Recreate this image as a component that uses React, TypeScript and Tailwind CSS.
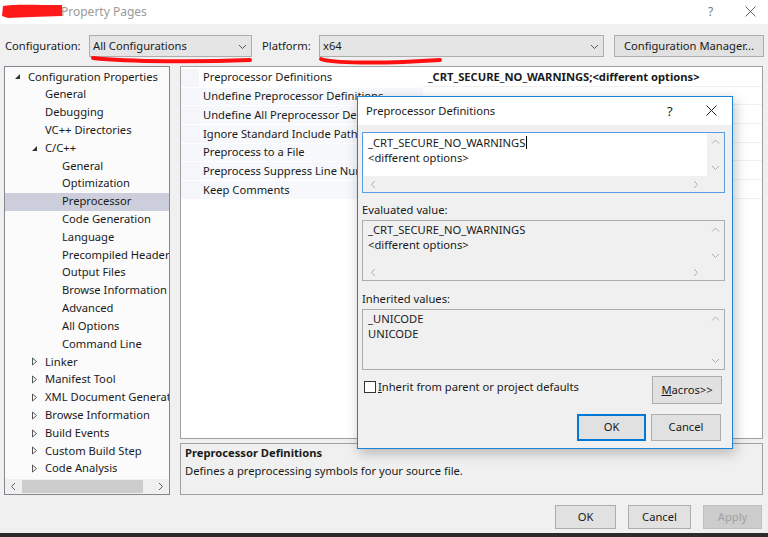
import React from "react";

const F = { fontFamily: '"Segoe UI", "Noto Sans", sans-serif' };

function Chevron({ dir, className = "" }: { dir: "down" | "up" | "left" | "right"; className?: string }) {
  const d =
    dir === "down" ? "M1 3 L4.5 6.5 L8 3" : dir === "up" ? "M1 6.5 L4.5 3 L8 6.5" : dir === "left" ? "M6 1 L2.5 4.5 L6 8" : "M3 1 L6.5 4.5 L3 8";
  return (
    <svg width="9" height="9" viewBox="0 0 9 9" className={className}>
      <path d={d} fill="none" stroke="currentColor" strokeWidth="1" />
    </svg>
  );
}

type Item = { t: string; lvl: number; tri?: "open" | "closed"; sel?: boolean };
const tree: Item[] = [
  { t: "Configuration Properties", lvl: 0, tri: "open" },
  { t: "General", lvl: 1 },
  { t: "Debugging", lvl: 1 },
  { t: "VC++ Directories", lvl: 1 },
  { t: "C/C++", lvl: 1, tri: "open" },
  { t: "General", lvl: 2 },
  { t: "Optimization", lvl: 2 },
  { t: "Preprocessor", lvl: 2, sel: true },
  { t: "Code Generation", lvl: 2 },
  { t: "Language", lvl: 2 },
  { t: "Precompiled Headers", lvl: 2 },
  { t: "Output Files", lvl: 2 },
  { t: "Browse Information", lvl: 2 },
  { t: "Advanced", lvl: 2 },
  { t: "All Options", lvl: 2 },
  { t: "Command Line", lvl: 2 },
  { t: "Linker", lvl: 1, tri: "closed" },
  { t: "Manifest Tool", lvl: 1, tri: "closed" },
  { t: "XML Document Generator", lvl: 1, tri: "closed" },
  { t: "Browse Information", lvl: 1, tri: "closed" },
  { t: "Build Events", lvl: 1, tri: "closed" },
  { t: "Custom Build Step", lvl: 1, tri: "closed" },
  { t: "Code Analysis", lvl: 1, tri: "closed" },
];

const props = [
  "Preprocessor Definitions",
  "Undefine Preprocessor Definitions",
  "Undefine All Preprocessor Definitions",
  "Ignore Standard Include Paths",
  "Preprocess to a File",
  "Preprocess Suppress Line Numbers",
  "Keep Comments",
];

function Tri({ kind }: { kind: "open" | "closed" }) {
  return kind === "open" ? (
    <svg width="7" height="7" viewBox="0 0 7 7">
      <path d="M6 1 L6 6 L1 6 Z" fill="#333" />
    </svg>
  ) : (
    <svg width="7" height="9" viewBox="0 0 7 9">
      <path d="M1.5 1 L5.5 4.5 L1.5 8 Z" fill="none" stroke="#555" strokeWidth="1" />
    </svg>
  );
}

function ScrollBox({ lines, focused, hbar, bg }: { lines: string[]; focused?: boolean; hbar: boolean; bg: string }) {
  return (
    <div className={`flex h-[61px] w-[363px] flex-col border ${focused ? "border-[#569de5]" : "border-[#adadad]"} ${bg}`}>
      <div className="flex min-h-0 flex-1">
        <div className="flex-1 px-[5px] pt-[1px] text-[11.2px] leading-[15px] text-[#1a1a1a]">
          {lines.map((l, i) => (
            <div key={i} className="whitespace-pre">
              {l}
              {focused && i === 0 ? <span className="ml-[1px] inline-block h-[13px] w-[1px] translate-y-[2px] bg-black" /> : null}
            </div>
          ))}
        </div>
        <div className="flex w-[17px] flex-col items-center justify-between bg-[#f0f0f0] py-[4px] text-[#b0b0b0]">
          <Chevron dir="up" />
          <Chevron dir="down" />
        </div>
      </div>
      {hbar ? (
        <div className="flex h-[16px] items-center justify-between bg-[#f0f0f0] pl-[6px] pr-[24px] text-[#b0b0b0]">
          <Chevron dir="left" />
          <Chevron dir="right" />
        </div>
      ) : null}
    </div>
  );
}

export default function App() {
  return (
    <div style={F} className="relative flex h-[537px] w-[768px] flex-col overflow-hidden bg-[#f0f0f0] text-[11.2px] text-[#1a1a1a]">
      {/* title bar */}
      <div className="relative flex h-[24px] items-center bg-white">
        <svg width="64" height="18" viewBox="0 0 64 18" className="absolute left-[0px] top-[2px]">
          <path d="M3 4 C12 2 35 3 62 3 L62 14 C40 15 22 15 8 16 L2 14 Z" fill="#ff1a1a" />
        </svg>
        <span className="ml-[61px] text-[12px] text-[#9a9a9a]">Property Pages</span>
        <span className="absolute left-[708px] top-[3px] text-[12px] text-[#777]">?</span>
        <svg width="11" height="11" viewBox="0 0 11 11" className="absolute left-[745px] top-[6px]">
          <path d="M0.5 0.5 L10.5 10.5 M10.5 0.5 L0.5 10.5" stroke="#666" strokeWidth="1" />
        </svg>
      </div>

      {/* toolbar */}
      <div className="flex h-[42px] items-start pt-[11px]">
        <span className="ml-[5px] mt-[3px] w-[84px]">Configuration:</span>
        <div className="flex h-[22px] w-[163px] items-center justify-between border border-[#adadad] bg-[#e5e5e5] pl-[3px] pr-[4px]">
          <span>All Configurations</span>
          <Chevron dir="down" className="text-[#555]" />
        </div>
        <span className="ml-[10px] mt-[3px] w-[57px]">Platform:</span>
        <div className="flex h-[22px] w-[285px] items-center justify-between border border-[#adadad] bg-[#e5e5e5] pl-[3px] pr-[4px]">
          <span>x64</span>
          <Chevron dir="down" className="text-[#555]" />
        </div>
        <div className="ml-[10px] flex h-[22px] w-[150px] items-center justify-center border border-[#adadad] bg-[#e1e1e1]">
          Configuration Manager...
        </div>
      </div>

      {/* main */}
      <div className="flex h-[429px]">
        {/* tree */}
        <div className="ml-[4px] flex w-[166px] flex-col border border-[#828790] bg-[#fbfbfb]">
          <div className="flex-1 pt-[1px]">
            {tree.map((it, i) => (
              <div key={i} className={`flex h-[17.82px] items-center whitespace-nowrap overflow-hidden ${it.sel ? "bg-[#cccedb]" : ""}`}>
                <div style={{ width: 23 + it.lvl * 17 }} className="flex shrink-0 items-center justify-end pr-[7px]">
                  {it.tri ? <Tri kind={it.tri} /> : null}
                </div>
                <span>{it.t}</span>
              </div>
            ))}
          </div>
          <div className="flex h-[15px] items-center bg-[#f0f0f0] text-[#606060]">
            <div className="flex w-[17px] justify-center">
              <Chevron dir="left" />
            </div>
            <div className="h-[13px] w-[121px] bg-[#cdcdcd]" />
            <div className="flex-1" />
            <div className="flex w-[17px] justify-center">
              <Chevron dir="right" />
            </div>
          </div>
        </div>

        {/* right */}
        <div className="ml-[10px] flex w-[583px] flex-col">
          <div className="h-[373px] border border-[#a0a0a0] bg-white pt-[2px]">
            {props.map((p, i) => (
              <div key={i} className="flex h-[18.7px] border-b border-white">
                <div className="w-[18px] bg-[#f4f6fa]" />
                <div className={`flex w-[224px] items-center pl-[4px] whitespace-nowrap ${i === 0 ? "bg-white" : "bg-[#f6f8fb]"}`}>{p}</div>
                <div className="flex flex-1 items-center border-b border-[#f0f0f0] pl-[5px] font-bold whitespace-nowrap">
                  {i === 0 ? "_CRT_SECURE_NO_WARNINGS;<different options>" : ""}
                </div>
              </div>
            ))}
          </div>
          <div className="mt-[4px] h-[52px] border border-[#a0a0a0] bg-[#f0f0f0] px-[4px] pt-[1px]">
            <div className="font-bold leading-[16px]">Preprocessor Definitions</div>
            <div className="mt-[2px] leading-[16px]">Defines a preprocessing symbols for your source file.</div>
          </div>
        </div>
      </div>

      {/* bottom buttons */}
      <div className="flex h-[38px] items-start justify-end gap-[12px] pr-[6px] pt-[10px]">
        <div className="flex h-[24px] w-[61px] items-center justify-center border border-[#adadad] bg-[#e1e1e1]">OK</div>
        <div className="flex h-[24px] w-[63px] items-center justify-center border border-[#adadad] bg-[#e1e1e1]">Cancel</div>
        <div className="flex h-[24px] w-[59px] items-center justify-center border border-[#bfbfbf] bg-[#cccccc] text-[#a0a0a0]">Apply</div>
      </div>
      <div className="h-[4px] bg-[#2b2b2b]" />

      {/* red underline annotations */}
      <svg width="768" height="80" viewBox="0 0 768 80" className="pointer-events-none absolute left-0 top-0">
        <path d="M93 58 C130 62 200 62 250 60" fill="none" stroke="#ff1010" strokeWidth="4" strokeLinecap="round" />
        <path d="M321 59 C330 63 380 64 440 60" fill="none" stroke="#ff1010" strokeWidth="4" strokeLinecap="round" />
      </svg>

      {/* dialog */}
      <div className="absolute left-[357px] top-[96px] flex h-[353px] w-[376px] flex-col border border-[#1883d7] bg-[#f0f0f0] shadow-[2px_4px_12px_rgba(0,0,0,0.25)]">
        <div className="relative flex h-[28px] items-center bg-white pl-[8px]">
          <span>Preprocessor Definitions</span>
          <span className="absolute left-[309px] top-[5px] text-[13px]">?</span>
          <svg width="11" height="11" viewBox="0 0 11 11" className="absolute left-[348px] top-[8px]">
            <path d="M0.5 0.5 L10.5 10.5 M10.5 0.5 L0.5 10.5" stroke="#222" strokeWidth="1" />
          </svg>
        </div>
        <div className="flex flex-col pl-[4px] pt-[7px]">
          <ScrollBox lines={["_CRT_SECURE_NO_WARNINGS", "<different options>"]} focused hbar bg="bg-white" />
          <div className="mt-[9px] leading-[16px]">Evaluated value:</div>
          <div className="mt-[2px]">
            <ScrollBox lines={["_CRT_SECURE_NO_WARNINGS", "<different options>"]} hbar bg="bg-[#f0f0f0]" />
          </div>
          <div className="mt-[10px] leading-[16px]">Inherited values:</div>
          <div className="mt-[2px]">
            <ScrollBox lines={["_UNICODE", "UNICODE"]} hbar={false} bg="bg-[#f0f0f0]" />
          </div>
          <div className="relative mt-[6px] flex h-[28px] items-start">
            <div className="ml-[2px] mt-[5px] h-[12px] w-[12px] border border-[#333] bg-white" />
            <span className="ml-[2px] mt-[3px]">
              <span className="underline">I</span>nherit from parent or project defaults
            </span>
            <div className="absolute left-[290px] top-0 flex h-[28px] w-[70px] items-center justify-center border border-[#adadad] bg-[#e1e1e1]">
              <span>
                <span className="underline">M</span>acros&gt;&gt;
              </span>
            </div>
          </div>
          <div className="mt-[10px] flex justify-end gap-[5px] pr-[11px]">
            <div className="flex h-[27px] w-[69px] items-center justify-center border-2 border-[#0078d7] bg-[#e1e1e1]">OK</div>
            <div className="flex h-[27px] w-[70px] items-center justify-center border border-[#adadad] bg-[#e1e1e1]">Cancel</div>
          </div>
        </div>
      </div>
    </div>
  );
}
